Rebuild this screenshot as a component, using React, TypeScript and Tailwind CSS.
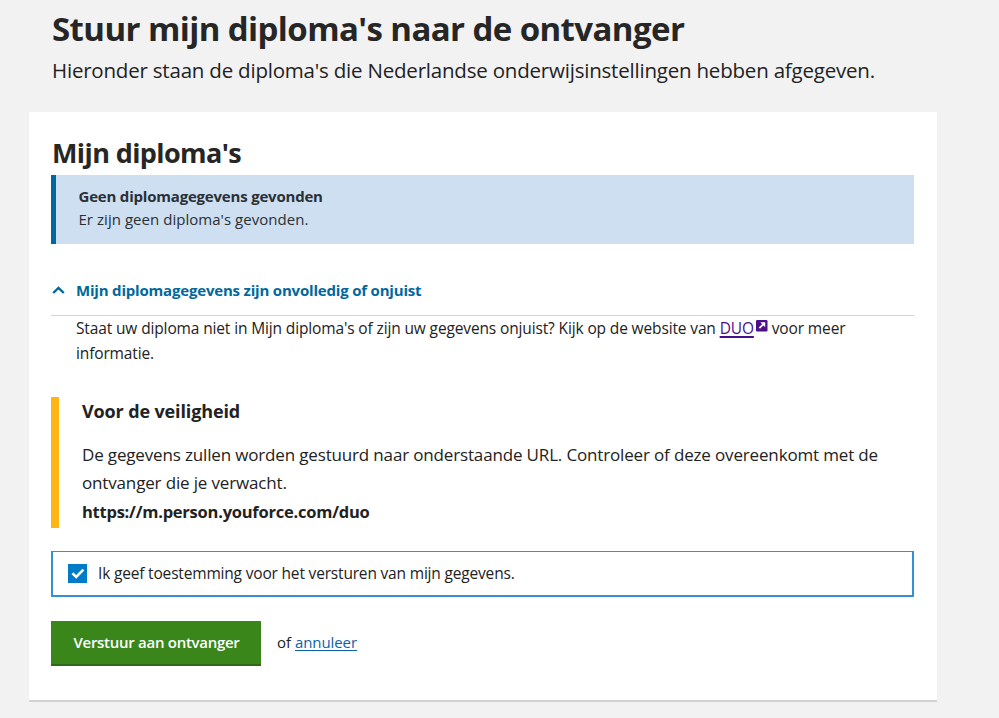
import type { ReactNode } from "react";

function ExternalIcon() {
  return (
    <svg viewBox="0 0 12 12" className="ml-0.5 inline-block h-3 w-3 -translate-y-0.5 align-baseline" aria-hidden>
      <rect width="11.5" height="11.5" rx="1.2" fill="#4b0f8a" />
      <path d="M4.3 2.3h4.9v4.9z" fill="#fff" />
      <path d="M7.5 4 3.4 8.1" fill="none" stroke="#fff" strokeWidth="1.7" />
    </svg>
  );
}

function ChevronUp() {
  return (
    <svg viewBox="0 0 13 8" className="ml-px h-2 w-[13px] shrink-0" aria-hidden>
      <path d="m1.2 7 5.3-5 5.3 5" fill="none" stroke="#01689b" strokeWidth="2.4" />
    </svg>
  );
}

function Alert({ title, children }: { title: string; children: ReactNode }) {
  return (
    <div className="mt-1 h-[69px] border-l-[5px] border-[#01689b] bg-[#cddff0] pt-2.5 pl-[22.5px] text-[15px] leading-[23px] text-[#2b2f36]">
      <p className="font-bold tracking-[-0.2px]">{title}</p>
      <p className="tracking-[0.04px]">{children}</p>
    </div>
  );
}

function SafetyNotice() {
  return (
    <section className="mt-[31px] h-[131px] border-l-8 border-[#ffb612] pl-[23px]">
      <h3 className="text-lg leading-7 font-bold tracking-[-0.13px]">Voor de veiligheid</h3>
      <p className="mt-4 text-[17px] leading-[28.4px] tracking-[-0.158px] whitespace-nowrap">
        De gegevens zullen worden gestuurd naar onderstaande URL. Controleer of deze overeenkomt met de
        <br />
        ontvanger die je verwacht.
        <br />
        <strong className="text-[16.5px] font-bold tracking-[-0.24px]">https://m.person.youforce.com/duo</strong>
      </p>
    </section>
  );
}

export default function App() {
  return (
    <main className="h-[718px] overflow-hidden bg-[#f2f2f2] pt-[7px] font-['Open_Sans',sans-serif] text-[#222]">
      <header className="pl-[52px] whitespace-nowrap">
        <h1 className="text-[33px] leading-[44px] font-bold tracking-[-0.59px] text-[#262626]">
          Stuur mijn diploma's naar de ontvanger
        </h1>
        <p className="mt-0.5 text-[20.5px] leading-[34px] tracking-[-0.205px]">
          Hieronder staan de diploma's die Nederlandse onderwijsinstellingen hebben afgegeven.
        </p>
      </header>

      <div className="mt-[25px] ml-[29px] h-[590px] w-[908px] border-b-2 border-[#d2d2d2] bg-white px-[23px] pt-[23px]">
        <div className="-ml-px w-[863px]">
          <h2 className="pl-px text-[27px] leading-9 font-bold tracking-[-0.6px] text-[#262626]">Mijn diploma's</h2>

          <Alert title="Geen diplomagegevens gevonden">Er zijn geen diploma's gevonden.</Alert>

          <button className="mt-[34px] flex h-[38px] w-full items-start border-b border-[#bfdaf0] text-left text-[15px] leading-6 font-bold tracking-[-0.19px] text-[#01689b]">
            <span className="flex h-6 w-[25px] items-center">
              <ChevronUp />
            </span>
            Mijn diplomagegevens zijn onvolledig of onjuist
          </button>
          <p className="pl-[25px] text-[15.5px] leading-[25px] tracking-[-0.135px] whitespace-nowrap">
            Staat uw diploma niet in Mijn diploma's of zijn uw gegevens onjuist? Kijk op de website van{" "}
            <a href="#duo" className="text-[#4b0f8a]">
              <span className="underline decoration-2 underline-offset-2">DUO</span>
              <ExternalIcon />
            </a>{" "}
            voor meer
            <br />
            informatie.
          </p>

          <SafetyNotice />

          <label className="mt-[23px] flex h-[46px] items-center border-2 border-t border-[#3391cf] pl-[15px] text-[15.5px] tracking-[-0.18px]">
            <input type="checkbox" defaultChecked className="sr-only" />
            <span className="mr-[11px] flex h-[19px] w-[19px] items-center justify-center bg-[#007bc7]">
              <svg viewBox="0 0 14 11" className="h-[11px] w-3.5" aria-hidden>
                <path d="m1.4 5.2 3.8 3.7 7.2-7.2" fill="none" stroke="#fff" strokeWidth="2.6" />
              </svg>
            </span>
            Ik geef toestemming voor het versturen van mijn gegevens.
          </label>

          <div className="mt-6 flex items-center text-[15px]">
            <button className="h-[45px] w-[210px] border-b-2 border-[#2f6b16] bg-[#3a861b] pl-px font-semibold tracking-[-0.28px] text-white">
              Verstuur aan ontvanger
            </button>
            <p className="ml-4 pb-0.5">
              of{" "}
              <a href="#annuleer" className="tracking-[-0.09px] text-[#0b62a8] underline underline-offset-2">
                annuleer
              </a>
            </p>
          </div>
        </div>
      </div>
    </main>
  );
}
